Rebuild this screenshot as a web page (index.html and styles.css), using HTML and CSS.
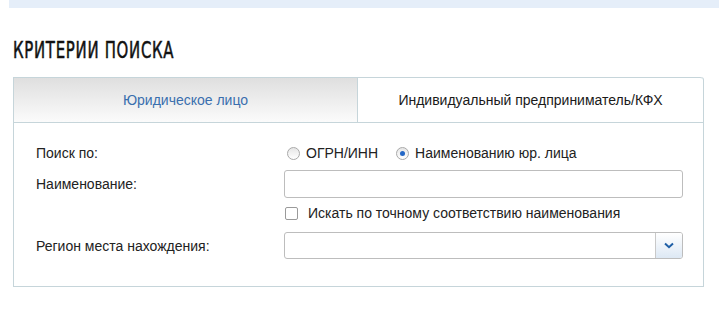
FILE: index.html
```html
<!DOCTYPE html>
<html lang="ru">
<head>
<meta charset="utf-8">
<title>Критерии поиска</title>
<link rel="stylesheet" href="styles.css">
</head>
<body>
<div class="topband"></div>
<h2 class="title"><span class="title-text">КРИТЕРИИ ПОИСКА</span></h2>
<div class="panel">
  <div class="tabs">
    <div class="tab tab-active">Юридическое лицо</div>
    <div class="tab">Индивидуальный предприниматель/КФХ</div>
  </div>
  <div class="form">
    <div class="row row-radio">
      <div class="label">Поиск по:</div>
      <div class="control radios">
        <span class="radio-item"><span class="radio"></span>ОГРН/ИНН</span>
        <span class="radio-item"><span class="radio radio-on"></span>Наименованию юр. лица</span>
      </div>
    </div>
    <div class="row row-input">
      <div class="label">Наименование:</div>
      <div class="control"><div class="input"></div></div>
    </div>
    <div class="row row-check">
      <div class="label"></div>
      <div class="control"><span class="check"></span>Искать по точному соответствию наименования</div>
    </div>
    <div class="row row-select">
      <div class="label">Регион места нахождения:</div>
      <div class="control">
        <div class="select">
          <div class="select-field"></div>
          <div class="select-btn">
            <svg width="10" height="7" viewBox="0 0 10 7"><path d="M1 1.5 L5 5.2 L9 1.5" fill="none" stroke="#1f5fa6" stroke-width="2"/></svg>
          </div>
        </div>
      </div>
    </div>
  </div>
</div>
</body>
</html>
```
FILE: styles.css
```css
html, body {
  margin: 0;
  padding: 0;
  background: #ffffff;
}
body {
  font-family: "Liberation Sans", Arial, sans-serif;
  font-size: 14px;
  color: #222;
}
.topband {
  margin-left: 9px;
  height: 8px;
  background: #e5eef9;
}
.title {
  margin: 27px 0 0 13px;
  height: 42px;
  font-family: "DejaVu Sans Condensed", "DejaVu Sans", sans-serif;
  font-weight: normal;
  font-size: 23px;
  line-height: 30px;
  color: #111;
}
.title-text {
  display: inline-block;
  letter-spacing: 1px;
  transform: scaleX(0.72);
  transform-origin: left center;
  -webkit-text-stroke: 0.5px #111;
}
.panel {
  margin-left: 13px;
  width: 689px;
  border: 1px solid #c6d5da;
  border-top: none;
  border-radius: 0 3px 0 0;
}
.tabs {
  display: grid;
  grid-template-columns: 344px 1fr;
  height: 45px;
  border-bottom: 1px solid #c6d5da;
}
.tab {
  display: flex;
  align-items: center;
  justify-content: center;
  border-top: 1px solid #c6d5da;
  color: #1a1a1a;
  border-radius: 0 3px 0 0;
}
.tab-active {
  background: linear-gradient(#dfdfdf, #fbfbfb);
  color: #3a6fae;
  border-right: 1px solid #c6d5da;
  border-radius: 0;
}
.form {
  padding: 22px 20px 27px 22px;
}
.row {
  display: grid;
  grid-template-columns: 248px 399px;
  align-items: center;
}
.label {
  color: #222;
}
.row-radio { height: 16px; }
.row-input { margin-top: 9px; height: 28px; }
.row-check { margin-top: 5px; height: 20px; }
.row-select { margin-top: 9px; height: 27px; }
.radios {
  display: flex;
  gap: 18px;
  padding-left: 3px;
}
.radio-item {
  display: inline-flex;
  align-items: center;
}
.radio {
  display: inline-block;
  width: 11px;
  height: 11px;
  border: 1px solid #a9a9a9;
  border-radius: 50%;
  background: linear-gradient(#e6e6e6, #ffffff);
  margin-right: 6px;
  position: relative;
}
.radio-on::after {
  content: "";
  position: absolute;
  left: 3px;
  top: 3px;
  width: 5px;
  height: 5px;
  border-radius: 50%;
  background: #2467c6;
}
.row-check .control {
  display: flex;
  align-items: center;
}
.check {
  display: inline-block;
  width: 11px;
  height: 11px;
  border: 1px solid #9a9a9a;
  border-radius: 2px;
  background: #fff;
  margin: 0 10px 0 1px;
}
.input {
  height: 26px;
  border: 1px solid #bdbdbd;
  border-radius: 3px;
  background: #fff;
}
.select {
  display: flex;
  height: 25px;
  border: 1px solid #bdbdbd;
  border-radius: 3px;
  overflow: hidden;
}
.select-field {
  flex: 1;
}
.select-btn {
  width: 26px;
  border-left: 1px solid #c9c9c9;
  background: linear-gradient(#ffffff, #dde8f4);
  display: flex;
  align-items: center;
  justify-content: center;
}
```
